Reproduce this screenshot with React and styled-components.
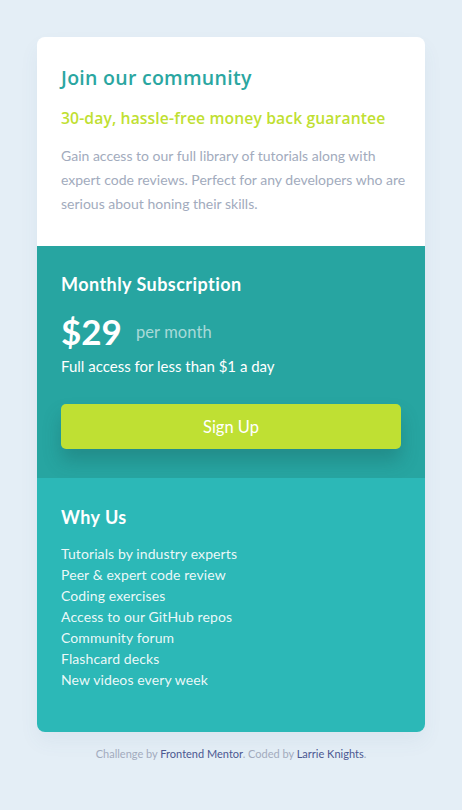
import React from "react";
import styled, { createGlobalStyle } from "styled-components";

const Global = createGlobalStyle`
  html, body { margin: 0; padding: 0; }
  body {
    background: #e4eef6;
    font-family: Lato, "Noto Sans", sans-serif;
    -webkit-font-smoothing: antialiased;
  }
`;

const Page = styled.main`
  min-height: 810px;
  box-sizing: border-box;
  padding: 37px 37px 0;
  display: flex;
  flex-direction: column;
  align-items: stretch;
`;

const Card = styled.article`
  border-radius: 8px;
  overflow: hidden;
  display: flex;
  flex-direction: column;
  box-shadow: 0 10px 20px rgba(60, 110, 140, 0.06);
`;

const Section = styled.section`
  box-sizing: border-box;
  height: ${(p) => p.$h}px;
  padding: ${(p) => p.$pad};
  background: ${(p) => p.$bg};
  color: #fff;
  display: flex;
  flex-direction: column;
`;

const Title = styled.h1`
  margin: 0;
  font-family: "Open Sans", Lato, sans-serif;
  font-size: 19.5px;
  font-weight: 600;
  letter-spacing: 0.28px;
  color: #2aa6a1;
  line-height: 28px;
`;

const Guarantee = styled.h2`
  margin: 14px 0 0;
  font-family: "Open Sans", Lato, sans-serif;
  font-size: 15.7px;
  font-weight: 600;
  letter-spacing: 0.12px;
  color: #bfdf32;
  line-height: 24px;
`;

const Lead = styled.p`
  margin: 14px -6px 0 0;
  font-size: 14px;
  line-height: 24px;
  color: #a2abbd;
`;

const SubHeading = styled.h3`
  margin: 0;
  font-size: 18px;
  font-weight: 700;
  line-height: 26px;
  color: #fff;
  letter-spacing: 0.45px;
`;

const PriceRow = styled.div`
  display: flex;
  align-items: center;
  gap: 14px;
  margin-top: 14px;
`;

const Price = styled.span`
  font-size: 35px;
  font-weight: 700;
  line-height: 40px;
`;

const Per = styled.span`
  font-size: 16.5px;
  color: rgba(255, 255, 255, 0.6);
  letter-spacing: 0.1px;
  padding-top: 2px;
`;

const Note = styled.p`
  margin: 4px 0 0;
  font-size: 15px;
  line-height: 22px;
`;

const Button = styled.button`
  margin-top: 27px;
  height: 45px;
  border: none;
  border-radius: 5px;
  background: #bfe033;
  color: #fff;
  font-family: inherit;
  font-size: 16.5px;
  box-shadow: 0 12px 18px rgba(20, 80, 80, 0.28);
  cursor: pointer;
`;

const List = styled.ul`
  list-style: none;
  margin: 13px 0 0;
  padding: 0;
  display: flex;
  flex-direction: column;
`;

const Item = styled.li`
  font-size: 14px;
  line-height: 21px;
  letter-spacing: 0.1px;
  color: rgba(255, 255, 255, 0.92);
`;

const Footer = styled.p`
  margin: 15px 0 0;
  text-align: center;
  font-size: 11px;
  color: #a2abbd;
`;

const Link = styled.a`
  color: #4b5891;
  text-decoration: none;
`;

const features = [
  "Tutorials by industry experts",
  "Peer & expert code review",
  "Coding exercises",
  "Access to our GitHub repos",
  "Community forum",
  "Flashcard decks",
  "New videos every week",
];

export default function App() {
  return (
    <>
      <Global />
      <Page>
        <Card>
          <Section $h={209} $pad="27px 24px 0" $bg="#ffffff">
            <Title>Join our community</Title>
            <Guarantee>30-day, hassle-free money back guarantee</Guarantee>
            <Lead>
              Gain access to our full library of tutorials along with expert code reviews.
              Perfect for any developers who are serious about honing their skills.
            </Lead>
          </Section>
          <Section $h={232} $pad="25px 24px 0" $bg="#27a5a1">
            <SubHeading>Monthly Subscription</SubHeading>
            <PriceRow>
              <Price>$29</Price>
              <Per>per month</Per>
            </PriceRow>
            <Note>Full access for less than $1 a day</Note>
            <Button>Sign Up</Button>
          </Section>
          <Section $h={254} $pad="26px 24px 0" $bg="#2cb8b7">
            <SubHeading>Why Us</SubHeading>
            <List>
              {features.map((f) => (
                <Item key={f}>{f}</Item>
              ))}
            </List>
          </Section>
        </Card>
        <Footer>
          Challenge by <Link href="#">Frontend Mentor</Link>. Coded by{" "}
          <Link href="#">Larrie Knights</Link>.
        </Footer>
      </Page>
    </>
  );
}
